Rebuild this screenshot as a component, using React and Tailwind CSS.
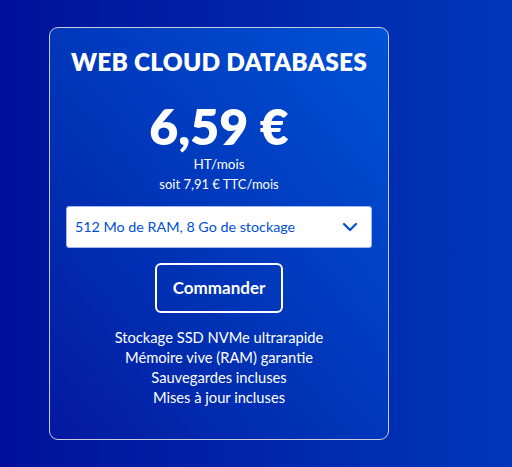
import React from "react";

function Chevron() {
  return (
    <svg width="16" height="10" viewBox="0 0 16 10" fill="none">
      <path d="M2 2l6 6 6-6" stroke="#0050d4" strokeWidth="2.2" strokeLinecap="round" strokeLinejoin="round" />
    </svg>
  );
}

export default function App() {
  const features = [
    "Stockage SSD NVMe ultrarapide",
    "Mémoire vive (RAM) garantie",
    "Sauvegardes incluses",
    "Mises à jour incluses",
  ];

  return (
    <div
      className="w-[512px] h-[467px] bg-gradient-to-r from-[#000f9b] to-[#0036ba] pt-[27px] pl-[49px] text-white"
      style={{ fontFamily: "Lato, 'Noto Sans', sans-serif" }}
    >
      <div className="w-[340px] h-[413px] rounded-[9px] border border-[#c9cde0] bg-gradient-to-bl from-[#0052d6] to-[#0518a0] flex flex-col items-center pt-[19px]">
        <h2 className="text-[24.5px] leading-[30px] font-extrabold tracking-[0.2px]">WEB CLOUD DATABASES</h2>
        <div className="mt-[22px] text-[50px] leading-[54px] font-extrabold">6,59 €</div>
        <div className="mt-[1px] text-[13.5px] leading-[20px]">HT/mois</div>
        <div className="text-[13px] leading-[20px]">soit 7,91 € TTC/mois</div>
        <div className="mt-[12px] w-[306px] h-[42px] bg-white rounded-[3px] border border-[#9fb8f0] flex items-center justify-between pl-[8px] pr-[13px]">
          <span className="text-[#0050d4] text-[14.3px]">512 Mo de RAM, 8 Go de stockage</span>
          <Chevron />
        </div>
        <button className="mt-[15px] w-[128px] h-[50px] rounded-[6px] border-2 border-white text-[17px] font-bold">
          Commander
        </button>
        <ul className="mt-[14px] text-center text-[14.7px] leading-[20px]">
          {features.map((f) => (
            <li key={f}>{f}</li>
          ))}
        </ul>
      </div>
    </div>
  );
}
